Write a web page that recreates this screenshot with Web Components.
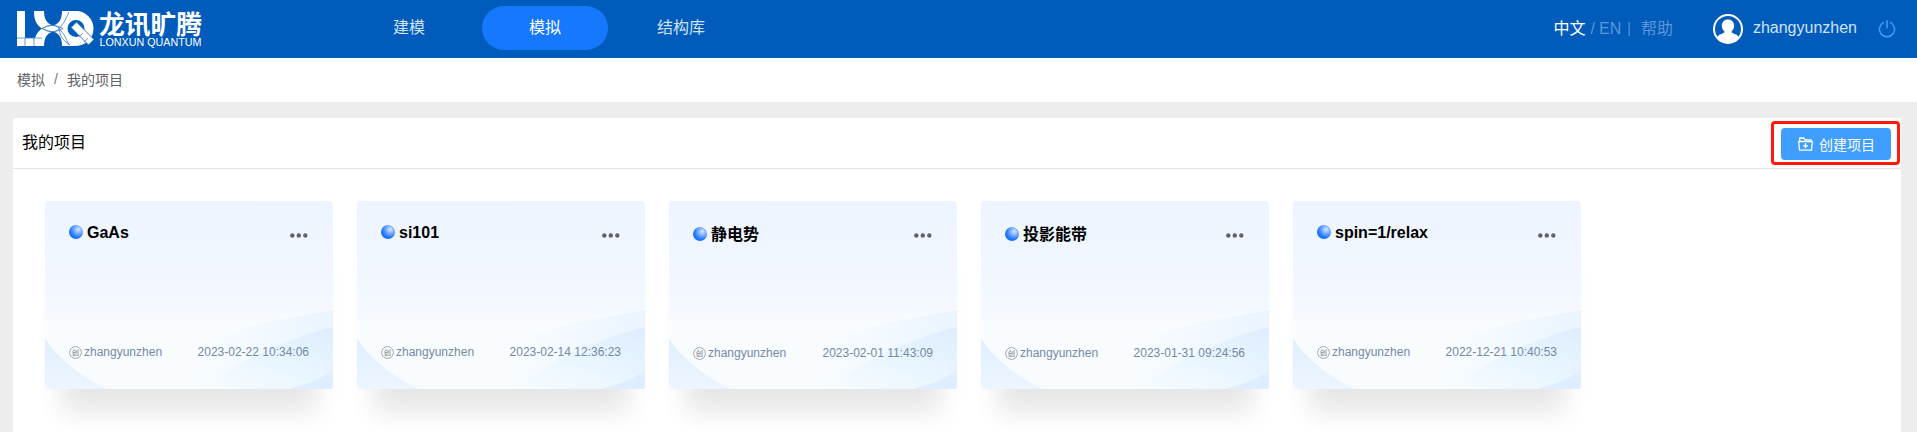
<!DOCTYPE html>
<html lang="zh">
<head>
<meta charset="utf-8">
<title>我的项目</title>
<style>
html,body{margin:0;height:100%;background:#ededed;overflow:hidden}
body{font-family:"Liberation Sans","Noto Sans CJK SC",sans-serif;}
</style>
</head>
<body>
<lx-app></lx-app>
<script>
const define = (name, html, init) => customElements.define(name, class extends HTMLElement {
  connectedCallback() {
    if (this.shadowRoot) return;
    const t = document.createElement('template');
    t.innerHTML = html;
    this.attachShadow({mode: 'open'}).append(t.content.cloneNode(true));
    if (init) init(this, this.shadowRoot);
  }
});

define('lx-logo', `<style>
:host{display:flex;width:188px;height:58px;padding-left:17px;box-sizing:border-box;color:#fff;gap:6px}
.mark{flex:none;width:77px;height:35px;margin-top:11px}
.words{display:block;flex:none;width:106px;height:58px;overflow:visible}
text{fill:#fff}
</style>
<svg class="mark" viewBox="0 0 77 35">
<g fill="#fff">
<path d="M0 0h8v27h17v8H0z"/>
<path d="M17 0h10c0 8 3 13 9 14.500c6-1.500 9-6.500 9-14.500h12v2c0 7-7 13-12 15.500c5 4 12 9 12 15.500v2H45c0-8-3-13-9-14.500c-6 1.500-9 6.500-9 14.500H17c0-9 3-14 8-17.500c-6-4-8-9-8-17.500z"/>
</g>
<circle cx="59" cy="17.500" r="13" fill="none" stroke="#fff" stroke-width="9"/>
<path d="M54 16.500l5.500-5.500 17.500 17.500-5.500 5.500z" fill="#fff" stroke="#005bbb" stroke-width=".8"/>
<g fill="none" stroke="#3f82cb" stroke-width=".8"><path d="M0 27h8v8M17 27v8M17 27h8M8 27h9M25 17.500Q35 11 46 17.500Q35 24 25 17.500M25 17.500Q35 23 41 19Q48 12 52 1M25 17.500Q35 12 41 16Q48 23 52 34M42 16c0 8 4 14 11 18M66 22l-4 4M71 27l-4 4"/></g>
</svg>
<svg class="words" viewBox="0 0 106 58">
<text x="-1" y="34" font-size="26" font-weight="700" textLength="103" lengthAdjust="spacingAndGlyphs">龙讯旷腾</text>
<text x="-.5" y="45.700" font-size="10.300" textLength="102" lengthAdjust="spacingAndGlyphs">LONXUN QUANTUM</text>
</svg>`);

define('lx-nav-item', `<style>
:host{display:flex;width:126px;height:44px;border-radius:22px;align-items:center;justify-content:center;font-size:16px;color:#d0e2f6;box-sizing:border-box;padding-bottom:1px}
:host([active]){background:#1677ff;color:#fff}
</style><slot></slot>`);

define('lx-header', `<style>
:host{display:flex;height:58px;background:#005bbb;align-items:center;font-size:16px;color:#fff;line-height:24px}
nav{display:flex;gap:10px;margin:-2px 0 0 158px}
.lang{display:flex;margin-left:auto;color:#5c97d6;white-space:pre}
.lang b{font-weight:400;color:#fff}
.avatar{width:30px;height:30px;margin-left:40px}
.name{margin:-3px 0 0 10px;color:#d0e2f6}
.power{width:18px;height:18px;margin:0 21px 0 21px}
</style>
<lx-logo></lx-logo>
<nav><lx-nav-item>建模</lx-nav-item><lx-nav-item active>模拟</lx-nav-item><lx-nav-item>结构库</lx-nav-item></nav>
<div class="lang"><b>中文</b><span style="margin-left:5px">/</span><span style="margin-left:4px">EN</span><span style="margin-left:6px;font-size:14px;margin-top:-1px">|</span><span style="margin-left:10px">帮助</span></div>
<svg class="avatar" viewBox="0 0 30 30"><circle cx="15" cy="15" r="14" fill="none" stroke="#fff" stroke-width="2"/><path fill="#fff" d="M15 5.500c3.700 0 6.200 2.700 6.200 6.200 0 2.500-1.200 4.300-2.500 5.600-.4 1.200.2 1.700 1.800 2.200 2.600.8 4.200 1.700 5 3.500A14 14 0 0 1 15 29.500 14 14 0 0 1 4.500 23c.8-1.800 2.400-2.700 5-3.500 1.600-.5 2.200-1 1.800-2.200-1.300-1.300-2.500-3.100-2.500-5.600C8.800 8.200 11.300 5.500 15 5.500z"/></svg>
<span class="name">zhangyunzhen</span>
<svg class="power" viewBox="0 0 18 18" fill="none" stroke="#3f9bff" stroke-width="1.600" stroke-linecap="round"><path d="M9 .8v7M5.300 2.600a7.600 7.600 0 1 0 7.400 0"/></svg>`);

define('lx-breadcrumb', `<style>
:host{display:flex;height:44px;background:#fff;align-items:center;padding:0 0 2px 17px;box-sizing:border-box;font-size:14px;color:#606266}
i{font-style:normal;margin:0 9px;color:#777}
</style><span>模拟</span><i>/</i><span>我的项目</span>`);

define('lx-button', `<style>
:host{display:flex;box-sizing:border-box;border:3px solid #ff1a0d;border-radius:4px;width:129px;height:44px;padding:4px 6px 2px 7px}
button{all:unset;display:flex;width:110px;height:32px;background:#409eff;color:#fff;border-radius:4px;font-size:14px;align-items:center;box-sizing:border-box;padding:0 0 1px 17px;gap:6px}
svg{width:15px;height:14px;flex:none}
</style><button><svg viewBox="0 0 15 14" fill="none" stroke="#fff" stroke-width="1.300" stroke-linejoin="round"><path d="M1.700 4.500V1h4l1.500 1.800h6v1.700M.7 4.500h13.600l-.8 8.700H1.500zM7.500 6.300v5M5 8.800h5"/></svg><slot></slot></button>`);

define('lx-card', `<style>
:host{display:block;width:288px;height:188px;border-radius:4px;box-shadow:0 39px 24px -16px #e7e7e7}
.body{position:relative;height:188px;border-radius:4px;overflow:hidden;display:flex;flex-direction:column;justify-content:space-between;box-sizing:border-box;padding:20px 24px 28px}
.bg{position:absolute;inset:0}
.row{position:relative;display:flex;justify-content:space-between}
.title{display:flex;font-size:16px;font-weight:700;color:#000;line-height:24px}
.title svg{width:14px;height:14px;margin:4px 4px 0 0}
.dots{width:18px;height:5px;margin-top:12px;margin-right:1px}
.meta{font-size:12px;color:#7489a3;line-height:18px}
.meta span{display:flex;align-items:center}
.at{box-sizing:border-box;width:13px;height:13px;margin-right:2px}
:host([cjk]) .body{padding-top:22px;padding-bottom:27px}
:host([cjk]) .dots{margin-top:10px}
</style>
<div class="body">
<svg class="bg" width="288" height="188" viewBox="0 0 288 188">
<defs>
<linearGradient id="a" x2="0" y2="1"><stop offset="0" stop-color="#edf5ff"/><stop offset=".5" stop-color="#f3f7ff"/><stop offset=".68" stop-color="#f9fcff"/><stop offset="1" stop-color="#f8fcff"/></linearGradient>
<linearGradient id="b" x1="0" x2="1"><stop offset="0" stop-color="#f8fcff"/><stop offset=".3" stop-color="#f5faff"/><stop offset="1" stop-color="#eaf4ff"/></linearGradient>
<linearGradient id="c" x1="1" y1="0" x2=".2" y2="1"><stop offset="0" stop-color="#deedff"/><stop offset=".6" stop-color="#eaf6ff"/><stop offset="1" stop-color="#f5fbff"/></linearGradient>
<linearGradient id="d" x2="0" y2="1"><stop offset="0" stop-color="#e0eeff"/><stop offset="1" stop-color="#edf6ff"/></linearGradient>
</defs>
<path fill="url(#a)" d="M0 0h288v188H0z"/>
<path fill="url(#b)" d="M170 137Q220 119 288 109.500V188H150z"/>
<path fill="url(#c)" d="M155 188Q220 142 288 126V188z"/>
<path fill="#deedff" d="M245 188Q270 181 288 170V188z"/>
<path fill="url(#d)" d="M0 138Q22 169 62 188H0z"/>
</svg>
<div class="row"><div class="title"><svg viewBox="0 0 14 14"><defs><radialGradient id="e" cx=".66" cy=".32" r=".66"><stop offset="0" stop-color="#d9e8ff"/><stop offset=".4" stop-color="#7fb0ff"/><stop offset=".9" stop-color="#1874ff"/></radialGradient></defs><circle cx="7" cy="7" r="7" fill="url(#e)"/></svg><slot></slot></div>
<svg class="dots" viewBox="0 0 18 5" fill="#606266"><circle cx="2.300" cy="2.500" r="2.200"/><circle cx="8.800" cy="2.500" r="2.200"/><circle cx="15.300" cy="2.500" r="2.200"/></svg></div>
<div class="row meta"><span><svg class="at" viewBox="0 0 13 13"><circle cx="6.500" cy="6.500" r="5.900" fill="none" stroke="#8b9097" stroke-width=".8"/><text x="6.500" y="9.200" text-anchor="middle" font-size="7.300" fill="#6f747b" font-family="Noto Sans CJK SC, sans-serif">创</text></svg>zhangyunzhen</span><time></time></div>
</div>`, (el, root) => { root.querySelector('time').textContent = el.getAttribute('time'); });

define('lx-panel', `<style>
:host{display:block;margin:16px 16px 0 13px;height:314px;background:#fff}
header{display:flex;height:51px;box-sizing:border-box;border-bottom:1px solid #e4e4e4;justify-content:space-between;padding:3px 1px 0 9px;color:#000}
h1{font-size:16px;font-weight:400;margin:10px 0 0;line-height:24px}
main{display:flex;gap:24px;padding:32px}
</style>
<header><h1>我的项目</h1><lx-button>创建项目</lx-button></header>
<main><slot></slot></main>`);

define('lx-app', `<style>:host{display:block}</style>
<lx-header></lx-header>
<lx-breadcrumb></lx-breadcrumb>
<lx-panel>
<lx-card time="2023-02-22 10:34:06">GaAs</lx-card>
<lx-card time="2023-02-14 12:36:23">si101</lx-card>
<lx-card cjk time="2023-02-01 11:43:09">静电势</lx-card>
<lx-card cjk time="2023-01-31 09:24:56">投影能带</lx-card>
<lx-card time="2022-12-21 10:40:53">spin=1/relax</lx-card>
</lx-panel>`);
</script>
</body>
</html>
